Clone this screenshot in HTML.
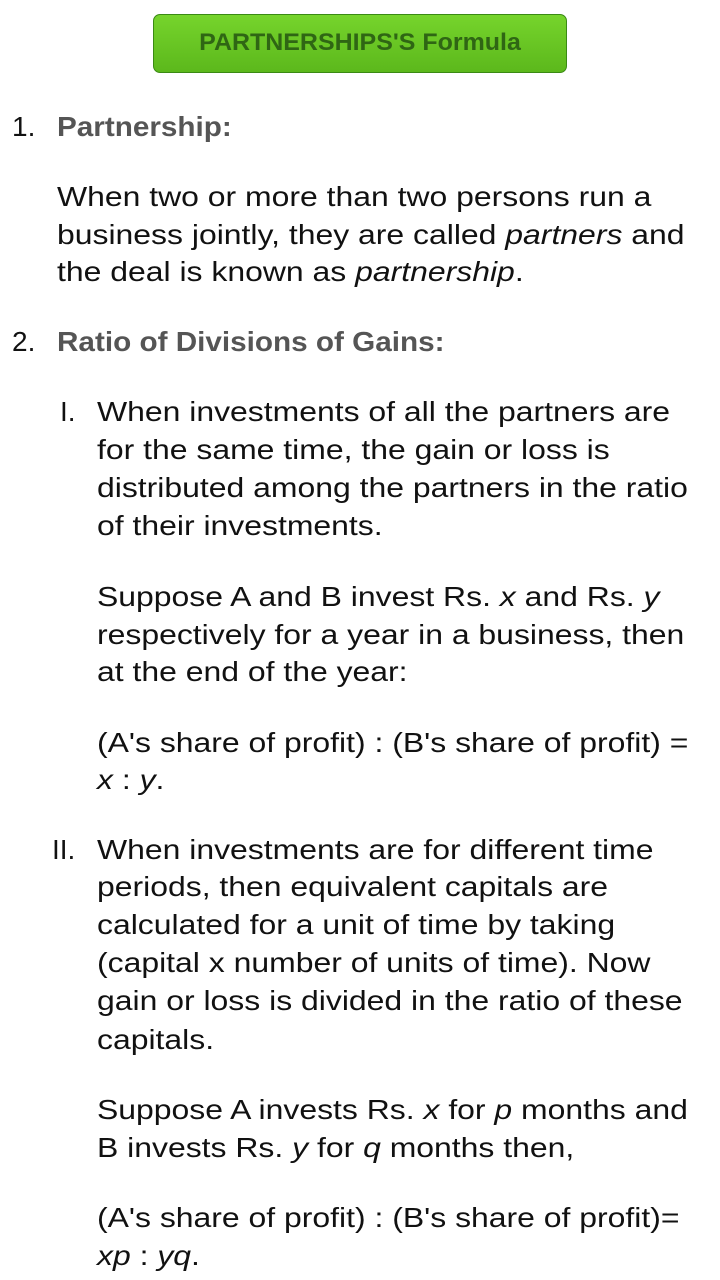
<!DOCTYPE html>
<html><head><meta charset="utf-8"><style>
html,body{margin:0;padding:0;background:#fff;width:720px;height:1280px;overflow:hidden;position:relative;font-family:"Liberation Sans",Arial,sans-serif}
.btn{position:absolute;left:153px;top:14px;width:414px;height:59px;border:1px solid #3a8a14;border-radius:7px;background:linear-gradient(#76d42c,#5cb81c);box-sizing:border-box}
.bt{position:absolute;left:360px;top:14px;line-height:57px;font-size:24px;font-weight:bold;color:#2f6614;white-space:nowrap;transform:translateX(-50%) scaleX(1.04)}
.l{position:absolute;white-space:nowrap;font-size:28px;line-height:38px;color:#111;transform:scaleX(1.14);transform-origin:0 50%}
.h{color:#555;font-weight:bold;transform:scaleX(1.06)}
.n{transform:none}
</style></head><body>
<div class="btn"></div><div class="bt">PARTNERSHIPS'S Formula</div>
<div class="l n" style="left:12px;top:108px">1.</div>
<div class="l h" style="left:57px;top:108px">Partnership:</div>
<div class="l" style="left:57px;top:178px">When two or more than two persons run a</div>
<div class="l" style="left:57px;top:216px">business jointly, they are called <i>partners</i> and</div>
<div class="l" style="left:57px;top:253px">the deal is known as <i>partnership</i>.</div>
<div class="l n" style="left:12px;top:323px">2.</div>
<div class="l h" style="left:57px;top:323px">Ratio of Divisions of Gains:</div>
<div class="l n" style="left:60px;top:393px">I.</div>
<div class="l" style="left:97px;top:393px">When investments of all the partners are</div>
<div class="l" style="left:97px;top:431px">for the same time, the gain or loss is</div>
<div class="l" style="left:97px;top:469px">distributed among the partners in the ratio</div>
<div class="l" style="left:97px;top:507px">of their investments.</div>
<div class="l" style="left:97px;top:578px">Suppose A and B invest Rs. <i>x</i> and Rs. <i>y</i></div>
<div class="l" style="left:97px;top:616px">respectively for a year in a business, then</div>
<div class="l" style="left:97px;top:653px">at the end of the year:</div>
<div class="l" style="left:97px;top:724px">(A's share of profit) : (B's share of profit) =</div>
<div class="l" style="left:97px;top:761px"><i>x</i> : <i>y</i>.</div>
<div class="l n" style="left:52px;top:831px">II.</div>
<div class="l" style="left:97px;top:831px">When investments are for different time</div>
<div class="l" style="left:97px;top:868px">periods, then equivalent capitals are</div>
<div class="l" style="left:97px;top:906px">calculated for a unit of time by taking</div>
<div class="l" style="left:97px;top:944px">(capital x number of units of time). Now</div>
<div class="l" style="left:97px;top:982px">gain or loss is divided in the ratio of these</div>
<div class="l" style="left:97px;top:1021px">capitals.</div>
<div class="l" style="left:97px;top:1091px">Suppose A invests Rs. <i>x</i> for <i>p</i> months and</div>
<div class="l" style="left:97px;top:1129px">B invests Rs. <i>y</i> for <i>q</i> months then,</div>
<div class="l" style="left:97px;top:1199px">(A's share of profit) : (B's share of profit)=</div>
<div class="l" style="left:97px;top:1237px"><i>xp</i> : <i>yq</i>.</div>
</body></html>
